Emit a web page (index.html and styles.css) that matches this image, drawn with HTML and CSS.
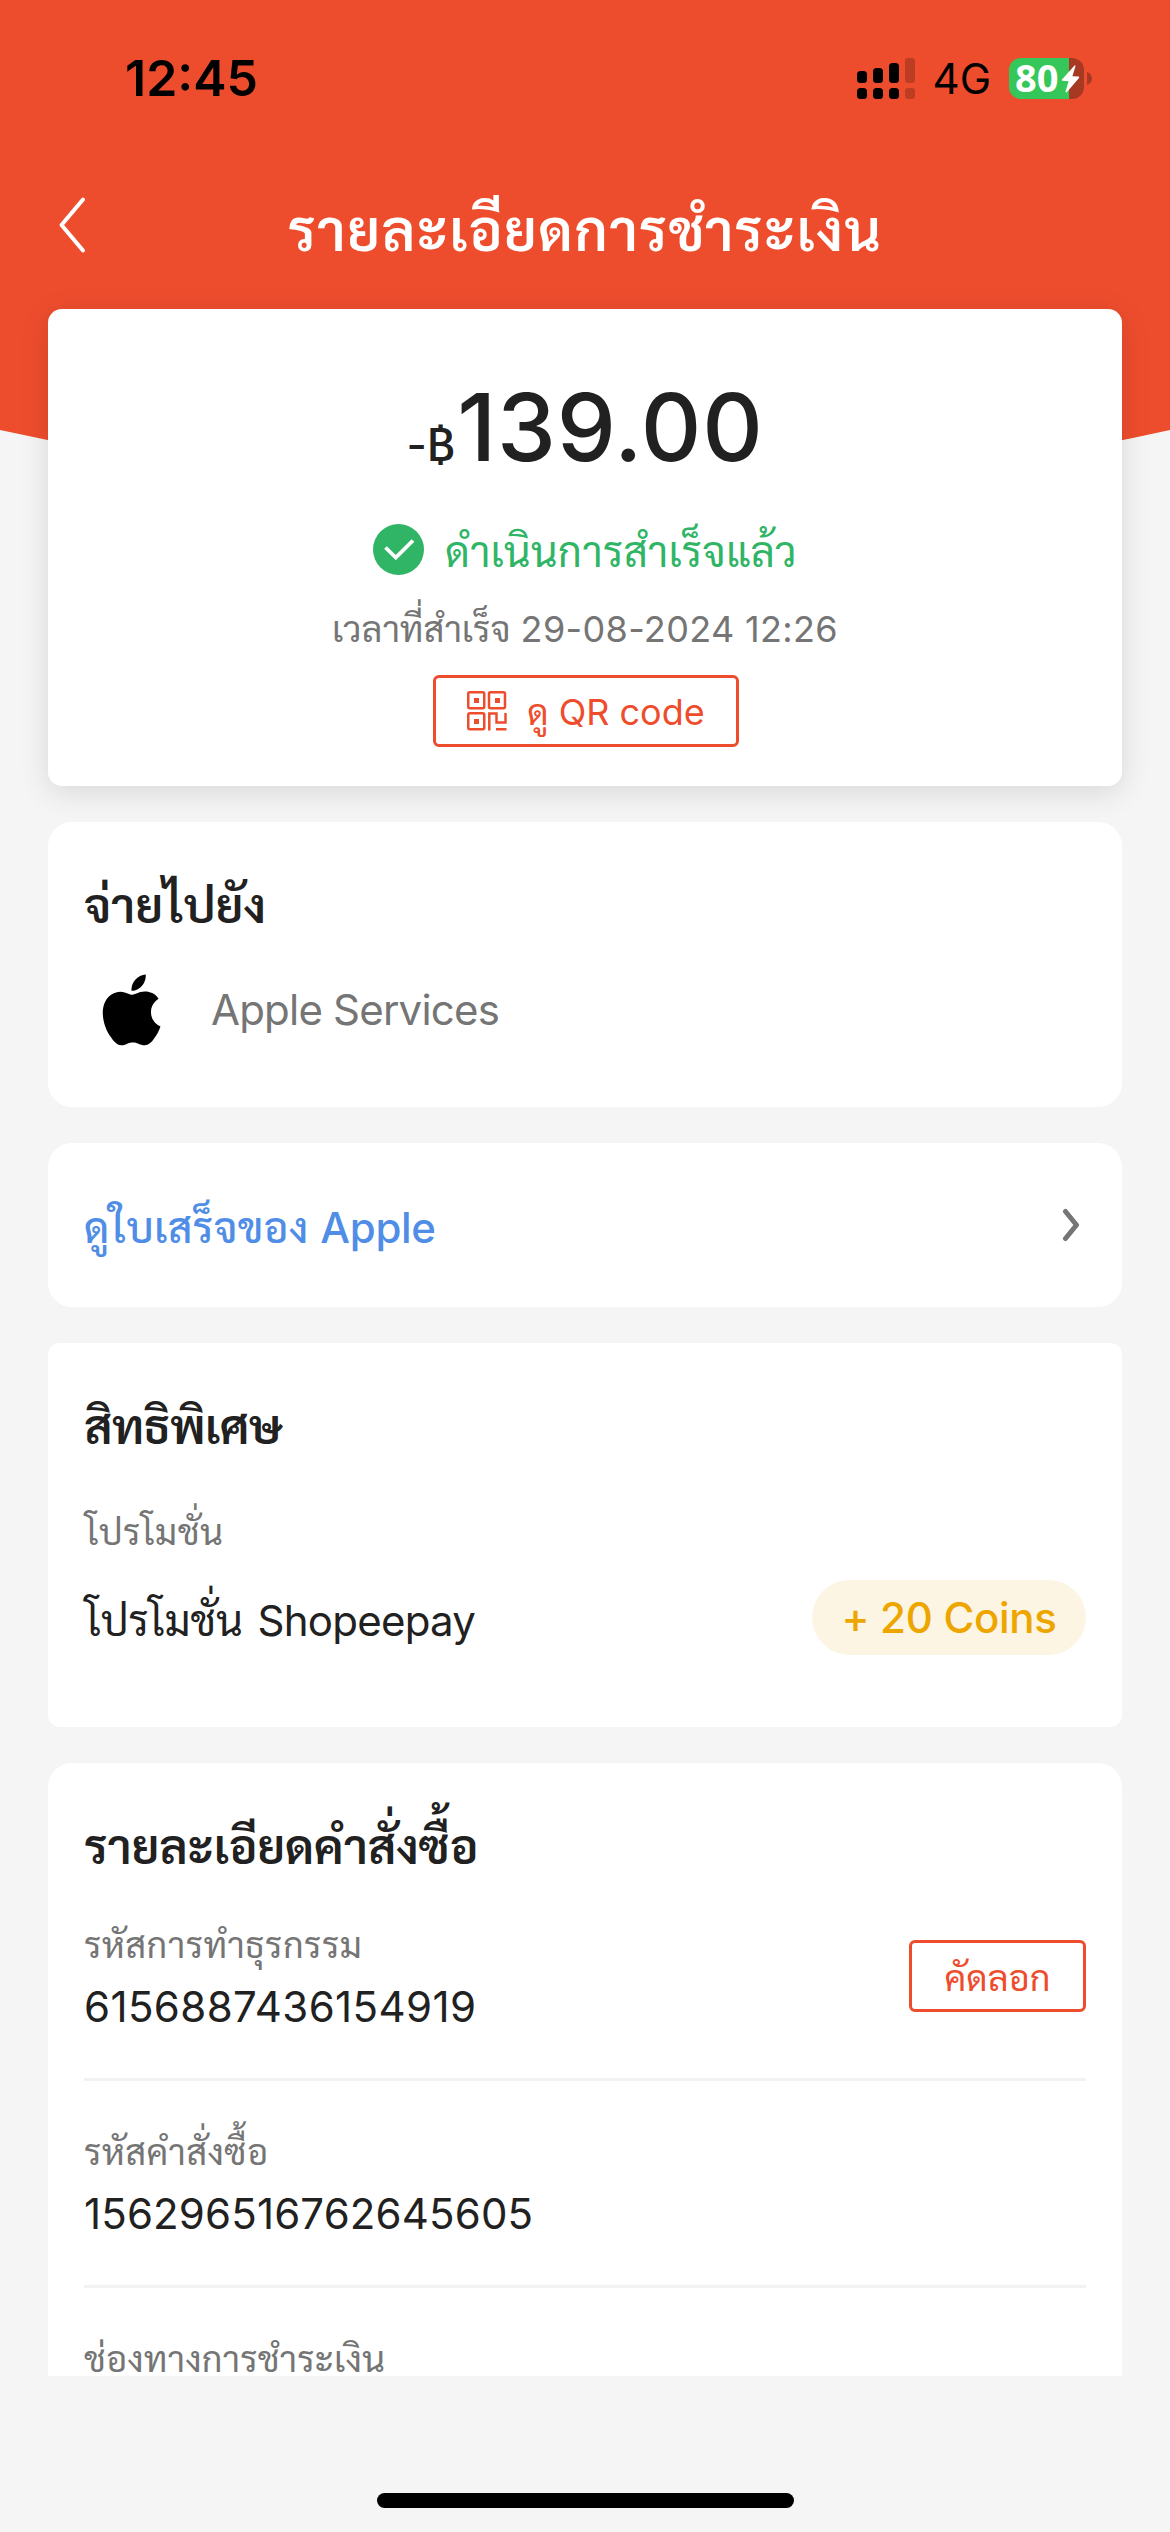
FILE: index.html
```html
<!DOCTYPE html>
<html lang="th">
<head>
<meta charset="utf-8">
<title>รายละเอียดการชำระเงิน</title>
<link rel="stylesheet" href="styles.css">
</head>
<body>
<div class="page">
  <svg class="backdrop" viewBox="0 0 1170 500" aria-hidden="true"><path d="M0 0H1170V430Q585 560 0 430Z" fill="#ee4d2d"/></svg>

  <div class="statusbar">
    <span class="clock">12:45</span>
    <svg class="signal" width="58" height="41" viewBox="0 0 58 41" aria-hidden="true">
      <rect x="0" y="13" width="10" height="12" rx="3.500"/><rect x="16" y="10" width="10" height="15" rx="3.500"/><rect x="32" y="5" width="10" height="20" rx="3.500"/>
      <rect x="0" y="30" width="10" height="11" rx="3.500"/><rect x="16" y="30" width="10" height="11" rx="3.500"/><rect x="32" y="30" width="10" height="11" rx="3.500"/>
      <g opacity=".2"><rect x="48" y="0" width="10" height="25" rx="3"/><rect x="48" y="30" width="10" height="11" rx="3"/></g>
    </svg>
    <span class="network">4G</span>
    <div class="battery">
      <span class="level">80</span>
      <svg class="bolt" width="19" height="28" viewBox="0 0 19 28" aria-hidden="true"><path d="M13.500 .500 1 14.500Q.300 15.600 1.500 15.800L7.600 16.200 4.500 26.500Q4.700 28 6 27L18 13Q18.700 11.800 17.500 11.600L11.400 11.200 14.500 1.200Q14.300 0 13.500 .500Z" fill="#fff"/></svg>
      <svg class="nub" width="5" height="13" viewBox="0 0 5 13" aria-hidden="true"><path d="M0 0Q5 2 5 6.500T0 13Z" fill="#a73822"/></svg>
    </div>
  </div>

  <header class="nav">
    <svg class="back" width="29" height="58" viewBox="0 0 29 58" aria-hidden="true"><path d="M26 3.500 4.500 29 26 54.500" fill="none" stroke="#fff" stroke-width="4" stroke-linecap="round" stroke-linejoin="round"/></svg>
    <h1 class="title">รายละเอียดการชำระเงิน</h1>
  </header>

  <main class="content">
    <section class="card summary">
      <div class="amount"><span class="currency">-<span class="baht">฿</span></span><span class="value">139.00</span></div>
      <div class="state">
        <svg width="51" height="51" viewBox="0 0 51 51" aria-hidden="true"><circle cx="25.500" cy="25.500" r="25.500" fill="#30b566"/><path d="M12.500 23.500 22.800 33.500 40 16.500" fill="none" stroke="#fff" stroke-width="3.800"/></svg>
        <span class="state-text">ดำเนินการสำเร็จแล้ว</span>
      </div>
      <div class="time">เวลาที่สำเร็จ <span class="date">29-08-2024 12:26</span></div>
      <div class="btn qr-btn">
        <svg width="40" height="40" viewBox="0 0 40 40" fill="none" stroke="#ee4d2d" stroke-width="2.500" aria-hidden="true">
          <rect x="1.250" y="1.250" width="16" height="16" rx="1.500"/><rect x="22" y="1.250" width="16" height="16" rx="1.500"/><rect x="1.250" y="22.300" width="16" height="16" rx="1.500"/>
          <g fill="#ee4d2d" stroke="none"><rect x="7" y="7" width="5" height="5"/><rect x="28" y="7" width="5" height="5"/><rect x="7" y="28" width="5" height="5"/></g>
          <path d="M22.300 39.500V22.500H29.500V31.500H38.500V22M29 38.300H39.500"/>
        </svg>
        <span class="qr-text">ดู QR code</span>
      </div>
    </section>

    <section class="card payee">
      <h2 class="heading">จ่ายไปยัง</h2>
      <div class="merchant">
        <svg width="96" height="72" viewBox="0 0 96 72" aria-hidden="true"><path transform="translate(12.200 .500) scale(2.950)" d="M12.152 6.896c-.948 0-2.415-1.078-3.960-1.040-2.040.027-3.910 1.183-4.961 3.014-2.117 3.675-.546 9.103 1.519 12.090 1.013 1.454 2.208 3.090 3.792 3.039 1.520-.065 2.090-.987 3.935-.987 1.831 0 2.350.987 3.960.948 1.637-.026 2.676-1.480 3.676-2.948 1.156-1.688 1.636-3.325 1.662-3.415-.039-.013-3.182-1.221-3.220-4.857-.026-3.040 2.480-4.494 2.597-4.559-1.429-2.090-3.623-2.324-4.390-2.376-2-.156-3.675 1.090-4.610 1.090zM15.530 3.830c.843-1.012 1.400-2.427 1.245-3.830-1.207.052-2.662.805-3.532 1.818-.780.896-1.454 2.338-1.273 3.714 1.338.104 2.715-.688 3.559-1.701"/></svg>
        <span class="merchant-name">Apple Services</span>
      </div>
    </section>

    <section class="card receipt">
      <span class="link">ดูใบเสร็จของ <span class="brand">Apple</span></span>
      <svg width="18" height="34" viewBox="0 0 18 34" aria-hidden="true"><path d="M3.500 3.500 14.500 17 3.500 30.500" fill="none" stroke="#757575" stroke-width="5" stroke-linecap="round" stroke-linejoin="round"/></svg>
    </section>

    <section class="card perks">
      <h2 class="heading tight">สิทธิพิเศษ</h2>
      <div class="label">โปรโมชั่น</div>
      <div class="promo">
        <span class="promo-name">โปรโมชั่น <span class="wallet">Shopeepay</span></span>
        <span class="badge">+ 20 Coins</span>
      </div>
    </section>

    <section class="card order">
      <h2 class="heading">รายละเอียดคำสั่งซื้อ</h2>
      <div class="item">
        <div>
          <div class="label">รหัสการทำธุรกรรม</div>
          <div class="number">6156887436154919</div>
        </div>
        <div class="btn copy-btn">คัดลอก</div>
      </div>
      <div class="item">
        <div>
          <div class="label">รหัสคำสั่งซื้อ</div>
          <div class="number long">156296516762645605</div>
        </div>
      </div>
      <div class="item">
        <div class="label long">ช่องทางการชำระเงิน</div>
      </div>
    </section>
  </main>

  <footer class="home"><div class="home-bar"></div></footer>
</div>
</body>
</html>
```
FILE: styles.css
```css
* { box-sizing: border-box; }
body { margin: 0; background: #f5f5f5; }
.page {
  position: relative;
  width: 1170px;
  height: 2532px;
  overflow: hidden;
  font-family: Inter, Sarabun, "Noto Sans Thai Looped", "Noto Sans Thai", sans-serif;
  color: #212121;
  white-space: nowrap;
}
.backdrop { position: absolute; left: 0; top: 0; width: 1170px; height: 500px; }
.statusbar, .nav, .content { position: relative; }
.statusbar { display: flex; align-items: center; height: 156px; padding: 0 79px 0 125px; color: #000; }
.clock { font-size: 50px; font-weight: 600; margin-right: auto; }
.network { font-size: 42px; line-height: 52px; margin: 2px 18px 0 18px; }
.battery {
  position: relative;
  display: flex;
  align-items: center;
  width: 75px;
  height: 41px;
  margin-right: 7px;
  padding: 0 0 2px 6px;
  border-radius: 12px;
  background: linear-gradient(90deg, #35c759 60px, #a73822 60px);
}
.level { font-family: "Open Sans", sans-serif; font-size: 38px; line-height: 40px; font-weight: 700; color: #fff; }
.bolt { position: absolute; left: 52px; top: 7px; }
.nub { position: absolute; left: 78px; top: 14px; }
.nav { display: flex; align-items: center; justify-content: center; height: 138px; }
.back { position: absolute; left: 57px; top: 40px; }
.title { margin: 0; padding-top: 11px; font-size: 57px; line-height: 80px; font-weight: 600; letter-spacing: 1.3px; color: #fff; }
.content { display: flex; flex-direction: column; gap: 36px; margin-top: 15px; padding: 0 48px; }
.card { background: #fff; border-radius: 24px; padding: 54px 36px 0; }
.heading { margin: 0; font-size: 48px; line-height: 60px; font-weight: 600; letter-spacing: -.05px; }
.heading.tight { letter-spacing: -.6px; }
.label { font-size: 36px; line-height: 50px; letter-spacing: .45px; color: #757575; }
.label.long { letter-spacing: .15px; }
.btn {
  display: flex;
  align-items: center;
  justify-content: center;
  height: 72px;
  border: 3px solid #ee4d2d;
  border-radius: 6px;
  font-size: 36px;
  line-height: 50px;
  color: #ee4d2d;
}
.summary {
  display: flex;
  flex-direction: column;
  align-items: center;
  height: 477px;
  padding-top: 61px;
  border-radius: 14px;
  box-shadow: 0 6px 30px rgba(0, 0, 0, .12);
}
.amount { height: 114px; font-size: 94px; line-height: 114px; font-weight: 500; letter-spacing: .7px; }
.currency { margin-right: 2px; font-size: 44px; line-height: 50px; letter-spacing: 0; }
.baht { font-family: Sarabun, Inter, sans-serif; font-size: 48px; }
.state { display: flex; align-items: center; gap: 21px; height: 60px; margin-top: 36px; color: #30b566; }
.state svg { margin-bottom: 1px; }
.state-text { padding-top: 3px; font-size: 42px; line-height: 60px; letter-spacing: .25px; }
.time { margin-top: 24px; font-size: 36px; line-height: 50px; color: #757575; }
.date { letter-spacing: .35px; }
.qr-btn { width: 306px; margin: 21px 0 0 2px; gap: 20px; }
.qr-text { padding-top: 2px; }
.payee { height: 285px; }
.merchant { display: flex; align-items: center; gap: 31px; height: 72px; margin-top: 38px; font-size: 42px; line-height: 60px; color: #757575; }
.merchant-name { letter-spacing: -.8px; }
.wallet { margin-left: 3px; letter-spacing: -.75px; }
.receipt { display: flex; align-items: center; justify-content: space-between; height: 164px; padding: 0 42px 0 36px; }
.link { padding-top: 5px; font-size: 42px; line-height: 60px; font-weight: 500; letter-spacing: .4px; color: #4f8de6; }
.brand { letter-spacing: -.3px; }
.perks { height: 384px; border-radius: 12px; }
.perks .label { margin-top: 50px; padding-left: 1px; }
.promo { display: flex; align-items: center; justify-content: space-between; height: 75px; margin-top: 23px; font-size: 42px; line-height: 60px; }
.promo-name { padding: 6px 0 0 1px; }
.badge { width: 274px; border-radius: 38px; background: #fdf5e4; color: #eda500; line-height: 75px; font-weight: 500; letter-spacing: -.3px; text-align: center; }
.order { height: 613px; border-radius: 24px 24px 0 0; overflow: hidden; }
.order .heading { margin-bottom: -3px; letter-spacing: -.15px; }
.item { display: flex; align-items: center; justify-content: space-between; height: 207px; padding: 46px 0 41px; border-bottom: 3px solid #f2f2f2; }
.number { margin-top: 7px; font-size: 42px; line-height: 60px; letter-spacing: .4px; }
.number.long { letter-spacing: .15px; }
.item:last-child { align-items: flex-start; }
.copy-btn { width: 177px; margin-bottom: 5px; padding-top: 3px; }
.home { display: flex; justify-content: center; margin-top: 117px; }
.home-bar { width: 417px; height: 15px; border-radius: 8px; background: #000; }
```
